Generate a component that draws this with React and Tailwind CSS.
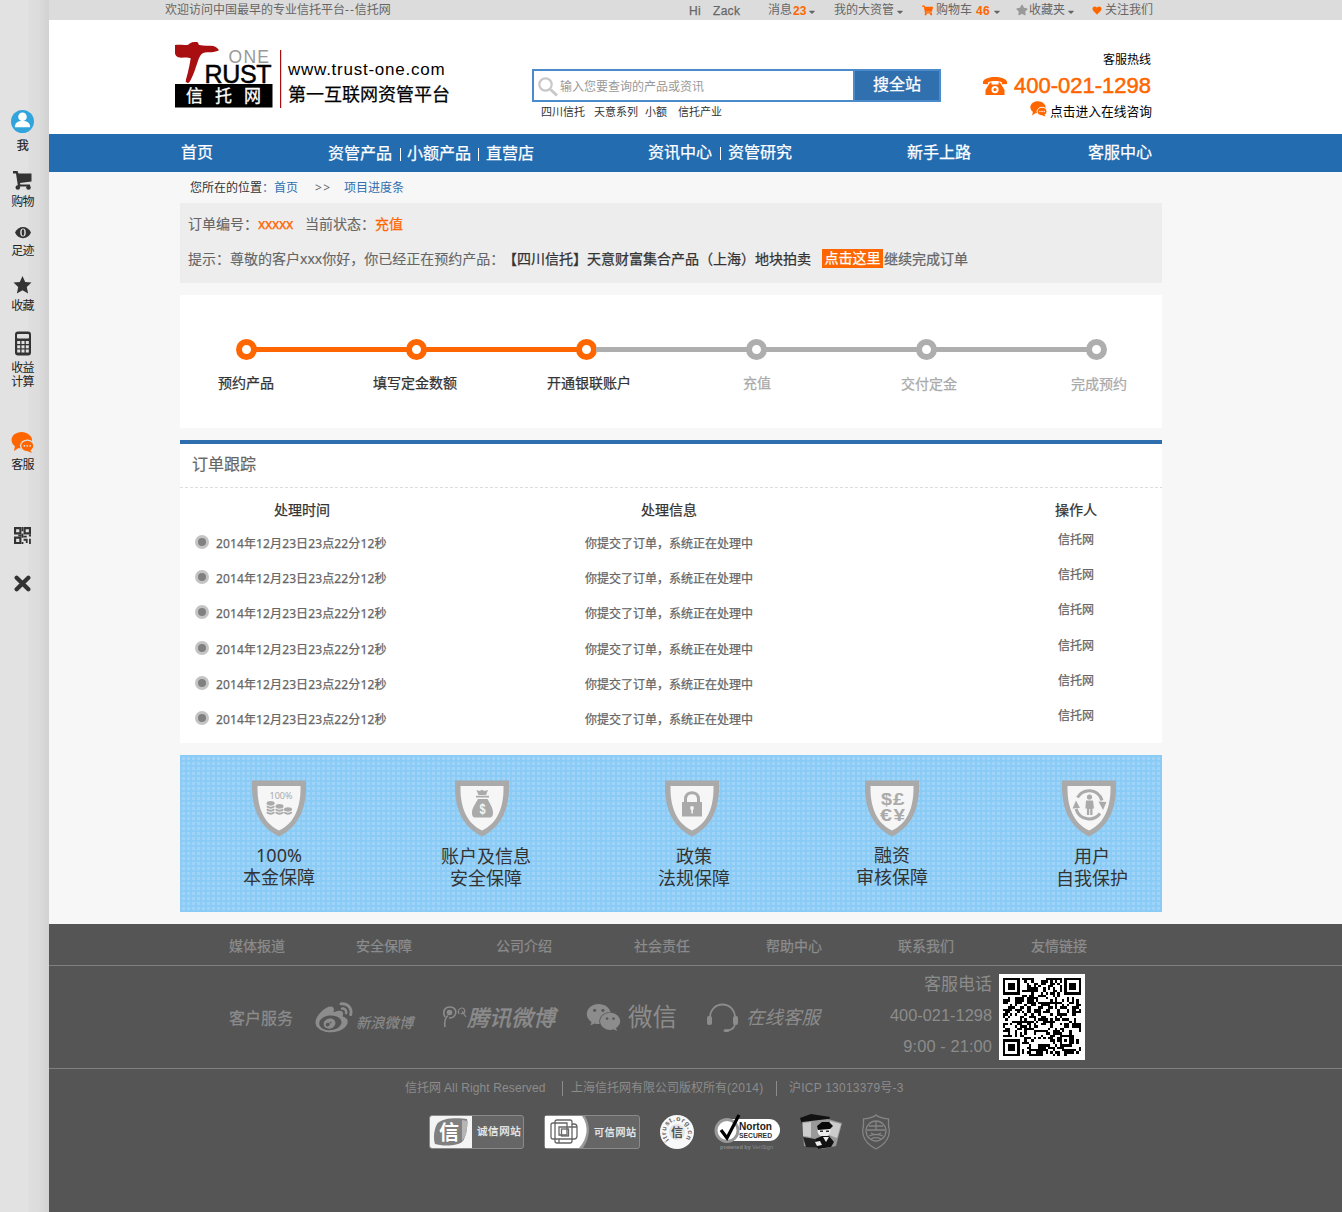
import React from "react";
import { FaWeibo, FaWeixin, FaShoppingCart, FaStar, FaHeart, FaCaretDown } from "react-icons/fa";

const medium = "[-webkit-text-stroke:0.25px_currentColor]";

function ChatIcon({ className, bg }) {
  return (
    <svg viewBox="0 0 24 22" className={className}>
      <path d="M11 0C5 0 .5 3.8.5 8.5c0 2.600 1.400 5 3.600 6.500L3 20l5-3.200c1 .2 2 .3 3 .2C17 17 22 13 22 8.500S17 0 11 0Z" fill="#ff6600" />
      <ellipse cx="17" cy="14.500" rx="7" ry="6" fill="#ff6600" stroke={bg} strokeWidth="1.400" />
      <path d="m20 18.500 2 3.200-5-1.500Z" fill="#ff6600" />
      <g fill={bg}>
        <circle cx="14" cy="14.500" r="1" />
        <circle cx="17" cy="14.500" r="1" />
        <circle cx="20" cy="14.500" r="1" />
      </g>
    </svg>
  );
}

function Sidebar() {
  const label = "text-[12px] leading-[14px] tracking-[-0.7px] text-[#222]";
  return (
    <aside className="flex w-[49px] shrink-0 flex-col items-center bg-[linear-gradient(90deg,#e2e2e2_0,#e2e2e2_28px,#dedede_29px,#dcdcdc_39px,#d5d5d5_45px,#d2d2d2_49px)] pr-[4px] pt-[110px]">
      <svg viewBox="0 0 24 24" className="h-[23px] w-[23px]">
        <circle cx="12" cy="12" r="12" fill="#32a4dc" />
        <circle cx="12" cy="7" r="4.500" fill="#fff" />
        <path d="M4 18c0-4.500 3-6.500 8-6.500s8 2 8 6.500Z" fill="#fff" />
      </svg>
      <span className={`mt-[6px] ${label} ${medium}`}>我</span>
      <svg viewBox="0 0 19 19" className="mt-[18px] h-[19px] w-[19px]" fill="#333">
        <path d="M0 0h4.500l1 2.500H18.500v8L7 12l.3 1.500H17V15.500H5L3 2.500H0Z" />
        <circle cx="4.800" cy="16.500" r="2.300" />
        <circle cx="15.500" cy="16.500" r="2.300" />
      </svg>
      <span className={`mt-[5px] ${label}`}>购物</span>
      <svg viewBox="0 0 16 12" className="mt-[17px] h-[13px] w-[16px]">
        <path d="M0 6C3-1.500 13-1.500 16 6 13 13.500 3 13.500 0 6Z" fill="#333" />
        <ellipse cx="8" cy="6" rx="2.800" ry="4" fill="#e0e0e0" />
        <ellipse cx="8" cy="6" rx="1.300" ry="3.300" fill="#333" />
      </svg>
      <span className={`mt-[5px] ${label}`}>足迹</span>
      <svg viewBox="0 0 18 18" className="mt-[18px] h-[18px] w-[19px]">
        <path d="m9 0 2.700 5.900 6.300.7-4.700 4.300L14.600 17.500 9 14.300 3.400 17.500l1.300-6.600L0 6.600l6.300-.7Z" fill="#333" />
      </svg>
      <span className={`mt-[5px] ${label}`}>收藏</span>
      <svg viewBox="0 0 16 24" className="mt-[18px] h-[25px] w-[16px]">
        <rect width="16" height="24" rx="3" fill="#333" />
        <rect x="2" y="2.500" width="12" height="4.500" rx="1" fill="#e0e0e0" />
        {[9.5, 13.8, 18].map((y) =>
          [2.2, 6.5, 10.8].map((x) => <rect key={`${x}-${y}`} x={x} y={y} width="3" height="3" fill="#e0e0e0" />)
        )}
      </svg>
      <span className={`mt-[5px] ${label}`}>收益</span>
      <span className={label}>计算</span>
      <ChatIcon className="mt-[43px] h-[21px] w-[23px]" bg="#e0e0e0" />
      <span className={`mt-[5px] ${label}`}>客服</span>
      <svg viewBox="0 0 16 16" className="mt-[55px] h-[17px] w-[17px]" fill="none" stroke="#333" strokeWidth="2">
        <path d="M1 1h5v5H1ZM10 1h5v5h-5ZM1 10h5v5H1Z" />
        <path d="M8 0v4M8 6v4M4 8h3M9 9h3M14 8h2M9 12h3v3M15 11v5M8 14v2" strokeWidth="1.700" />
      </svg>
      <svg viewBox="0 0 16 16" className="mt-[31px] h-[17px] w-[17px]">
        <path d="m2.500 2.500 11 11m0-11-11 11" stroke="#333" strokeWidth="4" strokeLinecap="round" />
      </svg>
    </aside>
  );
}

function TopBar() {
  const caret = "ml-[3px] mt-[3px] h-[10px] w-[6px] text-[#666]";
  return (
    <div className="flex h-[20px] items-center bg-[#dcdcdc] pl-[116px] text-[12px] leading-[20px] text-[#666]">
      <span className="w-[524px]">欢迎访问中国最早的专业信托平台<span className="tracking-[1px]">--</span>信托网</span>
      <span className={`w-[24px] translate-y-px font-['Liberation_Sans'] ${medium} tracking-[0.3px]`}>Hi</span>
      <span className={`w-[55px] translate-y-px font-['Liberation_Sans'] ${medium} tracking-[0.3px]`}>Zack</span>
      <span className="flex w-[66px] items-center">
        消息<b className="ml-px translate-y-px font-['Liberation_Sans'] text-[#ff6600]">23</b>
        <FaCaretDown className={caret} />
      </span>
      <span className="flex w-[88px] items-center">
        我的大资管
        <FaCaretDown className={caret} />
      </span>
      <span className="flex w-[94px] items-center">
        <FaShoppingCart className="mr-[3px] h-[11px] w-[11px] text-[#ff6600]" />
        购物车<b className="ml-[4px] mr-px translate-y-px font-['Liberation_Sans'] tracking-[0.4px] text-[#ff6600]">46</b>
        <FaCaretDown className={caret} />
      </span>
      <span className="flex w-[76px] items-center">
        <FaStar className="mr-px h-[12px] w-[12px] text-[#999]" />
        收藏夹
        <FaCaretDown className={caret} />
      </span>
      <span className="flex items-center">
        <FaHeart className="mr-[3px] h-[9px] w-[10px] text-[#ff6600]" />
        关注我们
      </span>
    </div>
  );
}

function Header() {
  return (
    <header className="flex h-[114px] items-start bg-white pl-[126px]">
      <svg viewBox="175 40 110 70" className="mt-[20px] h-[70px] w-[110px]">
        <path
          d="M175 45C180 44.500 184 45.300 188.300 44.700 191 42 193 42 196.700 42 199 42.500 198 44.500 199.300 45 204 46 209 45.500 213.300 46 216 47 218 48.500 219 50.300 217 51.500 214 52 211.700 52.300 208 52 205 52 202.700 53.300 200 55 198.700 58.500 197.700 61.700 196.500 65 195.500 68.500 194.300 71.700 192.500 76 191 80 189.300 82.300 188 83.300 186 83 185.700 81.700 186 79 187 76 187.700 73.300 189 68 190 63 190.700 58.300 187 56.500 182 58.500 178.300 57.300 176 56.500 175.300 55 175 53.300Z"
          fill="#a90e10"
        />
        <text x="228.500" y="62.700" fontSize="17.500" letterSpacing="1.300" fill="#999" fontFamily="Liberation Sans">ONE</text>
        <text x="204.500" y="83" fontSize="25" fill="#000" stroke="#000" strokeWidth=".5" fontFamily="Liberation Sans" textLength="67">RUST</text>
        <rect x="175" y="84" width="97.500" height="23.500" fill="#000" />
        <text x="186" y="102" fontSize="17" letterSpacing="12" fill="#fff" stroke="#fff" strokeWidth=".3" fontFamily="Noto Sans CJK SC">信托网</text>
        <rect x="280" y="50" width="1.200" height="58" fill="#a90e10" />
      </svg>
      <div className="mt-[39px] w-[244px] pl-[3px] text-black">
        <div className="font-['Liberation_Sans'] text-[17px] leading-[22px] tracking-[0.75px]">www.trust-one.com</div>
        <div className={`mt-px text-[18px] leading-[24px] ${medium}`}>第一互联网资管平台</div>
      </div>
      <div className="ml-[3px] mt-[49px] w-[409px]">
        <div className="flex h-[33px] border-2 border-[#4b8bcb] bg-white">
          <div className="flex flex-1 items-center pl-[4px] text-[12px] text-[#999]">
            <svg viewBox="0 0 20 20" className="mr-[2px] mt-[2px] h-[20px] w-[20px]" fill="none" stroke="#c8c8c8">
              <circle cx="7.500" cy="7.500" r="6.200" strokeWidth="2.200" />
              <path d="m12.500 12.500 6.500 6" strokeWidth="3" />
            </svg>
            <span className="translate-y-px">输入您要查询的产品或资讯</span>
          </div>
          <div className={`flex w-[86px] items-center justify-center border-l-2 border-[#4b8bcb] bg-[#3070ae] pb-[3px] text-[16px] leading-[16px] text-white ${medium}`}>
            搜全站
          </div>
        </div>
        <div className="flex pl-[9px] pt-px text-[11px] leading-[18px] text-[#333]">
          <span className="w-[53px]">四川信托</span>
          <span className="w-[51px]">天意系列</span>
          <span className="w-[33px]">小额</span>
          <span>信托产业</span>
        </div>
      </div>
      <div className="ml-[42px] mt-[31px] flex w-[169px] flex-col items-end text-black">
        <div className="mr-px text-[12px] leading-[18px]">客服热线</div>
        <div className="mr-px mt-px flex h-[32px] items-center gap-[7px]">
          <svg viewBox="0 0 24 18" className="h-[18px] w-[24px]" fill="#ff6600">
            <path d="M12 0C6 0 1.500 1.500 0 4.500V7l5 .2V5.500C7 3.500 17 3.500 19 5.500v1.700L24 7V4.500C22.500 1.500 18 0 12 0Z" />
            <path fillRule="evenodd" d="M8.500 5.500v2h7v-2H17L21.500 13v5h-19v-5L7 5.500ZM12 9a3.600 3.600 0 1 0 0 7.200A3.600 3.600 0 0 0 12 9Z" />
            <circle cx="12" cy="12.600" r="1.600" />
          </svg>
          <span className={`font-['Liberation_Sans'] text-[22px] leading-[32px] text-[#ff6600] [-webkit-text-stroke:0.5px_currentColor]`}>400-021-1298</span>
        </div>
        <div className="-mt-px flex items-center gap-[3px] text-[12.75px] leading-[20px]">
          <ChatIcon className="-mt-[4px] h-[16px] w-[17px]" bg="#ffffff" />
          点击进入在线咨询
        </div>
      </div>
    </header>
  );
}

function Nav() {
  const bar = "mt-[2px] h-[13px] w-px bg-white";
  return (
    <nav className={`flex h-[38px] items-center bg-[#236cb0] pl-[132px] text-[16px] leading-[36px] text-white ${medium}`}>
      <a className="w-[147px] -translate-y-px">首页</a>
      <div className="flex w-[320px] items-center">
        <a>资管产品</a><i className={`ml-[8px] mr-[6px] ${bar}`} />
        <a>小额产品</a><i className={`mx-[7px] ${bar}`} />
        <a>直营店</a>
      </div>
      <div className="flex w-[259px] -translate-y-px items-center">
        <a>资讯中心</a><i className={`ml-[8px] mr-[7px] ${bar}`} />
        <a>资管研究</a>
      </div>
      <a className="w-[181px] -translate-y-px">新手上路</a>
      <a className="-translate-y-px">客服中心</a>
    </nav>
  );
}

function OrderInfo() {
  return (
    <>
      <div className="flex h-[31px] items-center whitespace-nowrap pl-[10px] text-[12px] leading-[31px]">
        <span className="w-[84px] text-[#333]">您所在的位置<span className="text-[#2f6fb0]">：</span></span>
        <a className="w-[41px] text-[#2f6fb0]">首页</a>
        <span className="w-[29px] tracking-[1.500px] text-[#666]">&gt;&gt;</span>
        <a className="text-[#2f6fb0]">项目进度条</a>
      </div>
      <section className="flex h-[80px] flex-col bg-[#ededed] pl-[8px] pt-[8px] text-[14px] leading-[26px] text-[#666]">
        <div className="flex [-webkit-text-stroke:0.12px_currentColor]">
          <span className="w-[70px]">订单编号：</span>
          <span className={`w-[47px] tracking-[-0.400px] text-[#ff6600] ${medium}`}>xxxxx</span>
          <span className="w-[70px]">当前状态：</span>
          <span className={`text-[#ff6600] ${medium}`}>充值</span>
        </div>
        <div className="mt-[9px] flex items-center">
          <span className="w-[315px] whitespace-nowrap [-webkit-text-stroke:0.12px_currentColor]">提示：尊敬的客户xxx你好，你已经正在预约产品：</span>
          <span className={`w-[319px] whitespace-nowrap text-[#333] ${medium}`}>【四川信托】天意财富集合产品（上海）地块拍卖</span>
          <span className={`-mt-px h-[19px] w-[61px] bg-[#ff6600] text-center leading-[18px] text-white ${medium}`}>点击这里</span>
          <span className={`-mt-px ml-px ${medium}`}>继续完成订单</span>
        </div>
      </section>
    </>
  );
}

const steps = [
  ["预约产品", "ml-[38px] w-[155px]", true],
  ["填写定金数额", "w-[174px]", true],
  ["开通银联账户", "w-[196px]", true],
  ["充值", "w-[158px]", false],
  ["交付定金", "w-[170px] translate-y-px", false],
  ["完成预约", "translate-y-px", false],
];

function Progress() {
  return (
    <section className="mt-[12px] h-[133px] bg-white pt-[44px]">
      <div className="flex items-center pl-[56px] pr-[55px]">
        {steps.map(([name, , done], i) => (
          <React.Fragment key={name}>
            {i > 0 && <div className={`-mx-px h-[5px] flex-1 ${done ? "bg-[#ff6600]" : "bg-[#aeaeae]"}`} />}
            <div className={`h-[21px] w-[21px] rounded-full border-[6px] bg-white ${done ? "border-[#ff6600]" : "border-[#aeaeae]"}`} />
          </React.Fragment>
        ))}
      </div>
      <div className="mt-[13px] flex text-[14px] leading-[20px]">
        {steps.map(([name, box, done]) => (
          <span key={name} className={`${box} ${medium} ${done ? "text-[#333]" : "text-[#aaa]"}`}>{name}</span>
        ))}
      </div>
    </section>
  );
}

function Tracking() {
  return (
    <section className="mt-[12px] h-[303px] border-t-4 border-[#2f6fb0] bg-white">
      <h2 className="h-[43px] pl-[12px] text-[16px] leading-[41px] text-[#666] [-webkit-text-stroke:0.2px_currentColor]">订单跟踪</h2>
      <div className="h-px bg-[repeating-linear-gradient(90deg,#ddd_0,#ddd_3px,transparent_3px,transparent_5px)]" />
      <div className={`flex h-[38px] pl-[94px] text-[14px] leading-[44px] text-[#333] ${medium}`}>
        <span className="w-[367px]">处理时间</span>
        <span className="w-[414px]">处理信息</span>
        <span>操作人</span>
      </div>
      {[0, 1, 2, 3, 4, 5].map((n) => (
        <div key={n} className={`flex h-[35.200px] pl-[15px] text-[12px] leading-[36px] text-[#666] ${medium}`}>
          <i className="mr-[7px] mt-[9px] h-[14px] w-[14px] rounded-full border-[3px] border-[#c4c4c4] bg-[#808080]" />
          <span className="w-[369px] tracking-[0.120px]">2014年12月23日23点22分12秒</span>
          <span className="w-[473px]">你提交了订单，系统正在处理中</span>
          <span className="-translate-y-[4px]">信托网</span>
        </div>
      ))}
    </section>
  );
}

function Coins() {
  const stack = (x, n) =>
    Array.from({ length: n }, (_, i) => (
      <path key={`${x}-${i}`} d={`M${x - 3.8} ${32.2 - i * 3}q3.800 3 7.600 0`} stroke="#aaa" strokeWidth="1.800" fill="none" />
    ));
  return (
    <g fill="#aaa">
      <text x="17.500" y="19" fontSize="9" fontFamily="Noto Sans" textLength="23" lengthAdjust="spacingAndGlyphs">100%</text>
      {stack(18.6, 4)}{stack(27.5, 3)}{stack(36, 2)}
      <ellipse cx="18.600" cy="22.800" rx="3.800" ry="1.700" />
      <ellipse cx="27.500" cy="25.800" rx="3.800" ry="1.700" />
      <ellipse cx="36" cy="29" rx="3.800" ry="1.700" />
    </g>
  );
}

const shieldArt = {
  coins: <Coins />,
  bag: (
    <g fill="#aaa">
      <path d="m21.500 10 3 1 2.500-1.300 2.500 1.300 3.500-1-2 5h-7.500ZM21 15.800h13v1.800H21ZM23 19h9.500c2.500 5 5.500 9 5.500 13.500 0 4-1 5-4 5H21c-3 0-4-1-4-5C17 28 20.500 24 23 19Z" />
      <text x="24.500" y="33.500" fontSize="14" fontWeight="bold" fill="#f6f6f6" fontFamily="Liberation Sans" textLength="6" lengthAdjust="spacingAndGlyphs">$</text>
    </g>
  ),
  lock: (
    <g fill="#aaa">
      <path d="M20.500 24v-5c0-8.500 13-8.500 13 0v5" fill="none" stroke="#aaa" strokeWidth="3" />
      <rect x="17" y="22" width="20" height="14.500" />
      <circle cx="27" cy="28" r="1.900" fill="#f6f6f6" />
      <rect x="26.300" y="28" width="1.600" height="5.500" fill="#f6f6f6" />
    </g>
  ),
  money: (
    <g fill="#aaa" fontFamily="Liberation Sans" fontWeight="bold" fontSize="17">
      <text x="16" y="24.500" textLength="11" lengthAdjust="spacingAndGlyphs">$</text>
      <text x="28" y="24.500" textLength="11.500" lengthAdjust="spacingAndGlyphs">£</text>
      <text x="15" y="40.500" textLength="12" lengthAdjust="spacingAndGlyphs">€</text>
      <text x="28.500" y="40.500" textLength="11.500" lengthAdjust="spacingAndGlyphs">¥</text>
    </g>
  ),
  person: (
    <g fill="#aaa">
      <path d="M15.500 17.500C21 8 36 8 40 20.500M38 33.500C32 41.500 18 41 14 29" fill="none" stroke="#aaa" strokeWidth="3" />
      <path d="M36.500 21.500 44.500 22 41 30ZM10.500 28.500 14 20.500l4 7.500Z" />
      <circle cx="27.500" cy="17" r="2.600" />
      <path d="M24 20.500h7l1 8h-1.500v6.500h-2.300v-6h-1v6h-2.300v-6.500h-1.500Z" />
    </g>
  ),
};

const guarantees = [
  ["coins", "100%", "本金保障", "ml-[55px] w-[88px]", "mt-[8px]"],
  ["bag", "账户及信息", "安全保障", "ml-[110px] w-[98px]", "ml-[8px] mt-[9px]"],
  ["lock", "政策", "法规保障", "ml-[117px] w-[88px]", "ml-[4px] mt-[9px]"],
  ["money", "融资", "审核保障", "ml-[112px] w-[88px]", "mt-[8px]"],
  ["person", "用户", "自我保护", "ml-[109px] w-[88px]", "ml-[6px] mt-[9px]"],
];

function Guarantees() {
  return (
    <section className="mt-[12px] flex h-[157px] bg-[#9fd3f7] bg-[linear-gradient(90deg,#8accf5_2px,transparent_2px),linear-gradient(#8accf5_2px,transparent_2px)] bg-[size:5px_5px]">
      {guarantees.map(([art, a, b, box, shift]) => (
        <div key={art} className={`flex shrink-0 flex-col items-center pt-[25px] ${box}`}>
          <svg viewBox="0 0 54 57" className="h-[57px] w-[54px] shrink-0">
            <path d="M0 .5h54C55 27 48 46 27 56.500 6 46-1 27 0 .500Z" fill="#aaa" />
            <path d="M5.500 6h43C49 26 43 43 27 50.500 11 43 5 26 5.500 6Z" fill="#f6f6f6" />
            {shieldArt[art]}
          </svg>
          <div className={`${shift} whitespace-nowrap text-center text-[18px] leading-[21.500px] text-[#333]`}>
            {a}<br />{b}
          </div>
        </div>
      ))}
    </section>
  );
}

function QrCode() {
  const size = 33;
  const cells = [];
  const inFinder = (x, y) => (x < 8 && y < 8) || (x > 24 && y < 8) || (x < 8 && y > 24);
  let seed = 20141223;
  for (let y = 0; y < size; y++)
    for (let x = 0; x < size; x++) {
      seed = (seed * 1103515245 + 12345) % 2147483648;
      const align = x > 23 && x < 29 && y > 23 && y < 29;
      if (!inFinder(x, y) && !align && (seed >> 12) % 100 < 50) cells.push(`M${x} ${y}h1v1h-1z`);
    }
  return (
    <svg viewBox="-1.700 -1.700 36.400 36.400" className="h-[86px] w-[86px] bg-white" shapeRendering="crispEdges">
      <path d={cells.join("")} />
      {[[0, 0], [26, 0], [0, 26]].map(([x, y]) => (
        <g key={`${x}-${y}`}>
          <rect x={x + 0.5} y={y + 0.5} width="6" height="6" fill="none" stroke="#000" />
          <rect x={x + 2} y={y + 2} width="3" height="3" />
        </g>
      ))}
      <rect x="24.500" y="24.500" width="4" height="4" fill="none" stroke="#000" />
      <rect x="26" y="26" width="1" height="1" />
    </svg>
  );
}

function Badges() {
  return (
    <div className="flex h-[38px] items-center pl-[380px]">
      <div className={`flex h-[34px] w-[95px] items-center rounded-[3px] border border-[#8a8a8a] bg-[#666] text-[10.500px] tracking-[0.600px] text-[#eee] ${medium}`}>
        <svg viewBox="0 0 42 32" className="mr-[5px] h-[32px] w-[42px] shrink-0 rounded-l-[2px] bg-[#f4f4f4]">
          <path d="M7 8C12 1 30 2 37 3c1 8-1 17-4 22-6 6-22 5-28 3-2-6-1-14 2-20Z" fill="#808080" />
          <path d="m32 4 6 1-2 14-4 6Z" fill="#b5b5b5" />
          <text x="9" y="23.500" fontSize="20" fill="#fff" fontFamily="Noto Sans CJK SC" fontWeight="bold">信</text>
        </svg>
        <span className="whitespace-nowrap">诚信网站</span>
      </div>
      <div className={`ml-[20px] flex h-[34px] w-[96px] items-center rounded-[3px] border border-[#8a8a8a] bg-[#666] text-[10px] tracking-[0.700px] text-[#eee] ${medium}`}>
        <svg viewBox="0 0 45 32" className="mr-[4px] h-[32px] w-[45px] shrink-0">
          <path d="M0 0h40c6 10 5 22-2 32H0Z" fill="#999" />
          <path d="M0 0h37c7 10 6 22-3 32H0Z" fill="#fff" />
          <g fill="none" stroke="#666" strokeWidth="1.300">
            <path d="M10 7V6q0-2 2-2h13q2 0 2 2v2h2q3 0 3 3v9q0 3-3 3h-2v2q0 2-2 2H12q-2 0-2-2v-2H8q-2 0-2-2V9q0-2 2-2Z" />
            <path d="M10 7h12v12h-8v-8h18M14 27v-4h13V8M10 7v16h4" />
            <rect x="16.500" y="13" width="7" height="7" />
          </g>
        </svg>
        <span className="whitespace-nowrap">可信网站</span>
      </div>
      <svg viewBox="0 0 34 34" className="ml-[20px] h-[34px] w-[34px]">
        <defs><path id="ring" d="M9.200 24.800A11 11 0 1 1 24.800 24.800" /></defs>
        <circle cx="17" cy="17" r="17" fill="#f8f8f8" />
        <circle cx="17" cy="17" r="8" fill="#e4e4e4" />
        <text fontSize="7" fontWeight="bold" fill="#666" fontFamily="Liberation Sans" textLength="50"><textPath href="#ring" startOffset="0">itrust.org.cn</textPath></text>
        <text x="11" y="21.500" fontSize="12" fontWeight="bold" fill="#555" fontFamily="Noto Sans CJK SC">信</text>
      </svg>
      <svg viewBox="0 0 66 38" className="ml-[20px] h-[38px] w-[66px]">
        <rect x="2" y="6" width="64" height="22" rx="11" fill="#fff" />
        <circle cx="13" cy="17.500" r="11" fill="#fff" stroke="#999" strokeWidth="3" />
        <path d="m7 17 6 8L25 2" fill="none" stroke="#000" strokeWidth="3.200" />
        <text x="25" y="16.500" fontSize="11" fontWeight="bold" fill="#222" fontFamily="Liberation Sans" textLength="33" lengthAdjust="spacingAndGlyphs">Norton</text>
        <text x="25" y="24.500" fontSize="6.800" fontWeight="bold" fill="#333" fontFamily="Liberation Sans" textLength="33" lengthAdjust="spacingAndGlyphs">SECURED</text>
        <text x="6" y="36" fontSize="5.500" fill="#8a8a8a" fontFamily="Liberation Sans" textLength="53"><tspan fontWeight="bold">powered by</tspan> VeriSign</text>
      </svg>
      <svg viewBox="0 0 42 36" className="ml-[20px] h-[36px] w-[42px]">
        <path d="M0 4 11 0l19 3-2 5-26 2Z" fill="#111" />
        <path d="m2 8 26-3 14 4-6 23-14 3L4 32Z" fill="#999" />
        <path d="m3 9 8-1v15l-8-1ZM30 7l11 3-4 14-8-3Z" fill="#ccc" />
        <path d="m3 23 12 2 4 9-13-1Z" fill="#222" />
        <ellipse cx="24" cy="17" rx="6.500" ry="6" fill="#eee" />
        <path d="m17 12 5-4h7l4 4-3 3-12 1Z" fill="#080808" />
        <path d="M20 16.500h3v1.500h-3ZM26 16.500h3v1.500h-3Z" fill="#333" />
        <path d="m15 25 7-3h7l5 6-3 5-13 2Z" fill="#111" />
        <path d="m23 23 3 5 3-5ZM15 28l5-1 2 4-5 1Z" fill="#eee" />
      </svg>
      <svg viewBox="0 0 28 36" className="ml-[20px] h-[36px] w-[28px]" fill="none" stroke="#858585" strokeWidth="1.300">
        <path d="M14 1c3 3 8 3.500 12.500 4v7c3 10-3 18-12.500 23C4.500 30-1.500 22 1.500 12V5c4.500-.5 9.500-1 12.500-4Z" />
        <circle cx="14" cy="17" r="10" />
        <path d="M7 12h14M5 16h18M14 7v9M9 19c3 2 7 2 10 0M7 22c4-2 10-2 14 0M9 25c4-2 6-2 10 0" />
      </svg>
    </div>
  );
}

function Footer() {
  const links = [
    ["媒体报道", "w-[127px]"],
    ["安全保障", "w-[140px]"],
    ["公司介绍", "w-[138px]"],
    ["社会责任", "w-[132px]"],
    ["帮助中心", "w-[132px]"],
    ["联系我们", "w-[133px]"],
    ["友情链接", ""],
  ];
  return (
    <footer className="mt-[12px] flex-1 bg-[#555] text-[#8c8c8c]">
      <div className={`flex h-[41px] pl-[180px] text-[14px] leading-[44px] ${medium}`}>
        {links.map(([t, w]) => <a key={t} className={w}>{t}</a>)}
      </div>
      <div className="flex h-[104px] items-center border-y border-[#808080] pl-[180px]">
        <span className={`w-[86px] translate-y-px text-[16px] ${medium}`}>客户服务</span>
        <div className="flex w-[128px] items-center">
          <FaWeibo className="mr-[3px] mt-[3px] h-[37px] w-[38px] shrink-0" />
          <span className="mt-[11px] whitespace-nowrap text-[14.300px] italic leading-[20px] [-webkit-text-stroke:0.15px_currentColor]">新浪微博</span>
        </div>
        <div className="flex w-[143px] items-center">
          <svg viewBox="0 0 24 22" className="h-[22px] w-[24px] shrink-0" fill="none" stroke="currentColor" strokeWidth="1.600">
            <path d="M2 21C1 15 2 12 5 9.500M2 11C-1 5 2 1 7 1s7 4 5 8c-1 2-3 3-6 3" />
            <circle cx="6.500" cy="6.500" r="2" fill="currentColor" />
            <path d="M16 8c-2-4 1-6 3-6s4 3 2 5c-1 1-3 1-3 0M19 5l4 6" strokeWidth="1.200" />
          </svg>
          <span className="whitespace-nowrap text-[22px] italic leading-[30px] [-webkit-text-stroke:0.5px_currentColor]">腾讯微博</span>
        </div>
        <div className="flex w-[121px] items-center">
          <FaWeixin className="mr-[7px] h-[35px] w-[35px] shrink-0" />
          <span className="whitespace-nowrap text-[24.500px] leading-[30px]">微信</span>
        </div>
        <div className="flex w-[181px] items-center">
          <svg viewBox="0 0 31 29" className="mr-[8px] h-[29px] w-[31px] shrink-0">
            <path d="M3 15C3-3 28-3 28 15M28 20c0 4-3 7-8 7.500" fill="none" stroke="currentColor" strokeWidth="1.800" />
            <rect x="0" y="13" width="5" height="9" rx="2" fill="currentColor" />
            <rect x="26" y="13" width="5" height="9" rx="2" fill="currentColor" />
            <ellipse cx="19.500" cy="27.500" rx="3" ry="1.500" fill="currentColor" />
          </svg>
          <span className="whitespace-nowrap text-[18.500px] italic leading-[24px]">在线客服</span>
        </div>
        <div className="flex w-[104px] -translate-y-[2px] flex-col items-end whitespace-nowrap font-['Liberation_Sans','Noto_Sans_CJK_SC'] text-[16.400px] leading-[31px]">
          <span className="text-[17px]">客服电话</span>
          <span>400-021-1298</span>
          <span className="tracking-[0.100px]">9:00 - 21:00</span>
        </div>
        <div className="ml-[7px]"><QrCode /></div>
      </div>
      <div className="flex h-[44px] pl-[356px] font-['Liberation_Sans','Noto_Sans_CJK_SC'] text-[12px] leading-[38px]">
        <span className="w-[39px]">信托网</span>
        <span className="w-[118px] tracking-[0.120px]">All Right Reserved</span>
        <i className="mt-[12px] h-[15px] w-px bg-[#8c8c8c]" />
        <span className="ml-[8px] w-[205px]">上海信托网有限公司版权所有<span className="tracking-[0.300px]">(2014)</span></span>
        <i className="mt-[12px] h-[15px] w-px bg-[#8c8c8c]" />
        <span className="ml-[12px] tracking-[0.220px]">沪ICP 13013379号-3</span>
      </div>
      <Badges />
    </footer>
  );
}

export default function App() {
  return (
    <div className="flex h-[1212px] w-[1342px] overflow-hidden bg-[#f7f7f7] font-['Noto_Sans','Noto_Sans_CJK_SC',sans-serif]">
      <Sidebar />
      <div className="flex w-[1293px] flex-col">
        <TopBar />
        <Header />
        <Nav />
        <main className="ml-[131px] w-[982px]">
          <OrderInfo />
          <Progress />
          <Tracking />
          <Guarantees />
        </main>
        <Footer />
      </div>
    </div>
  );
}
